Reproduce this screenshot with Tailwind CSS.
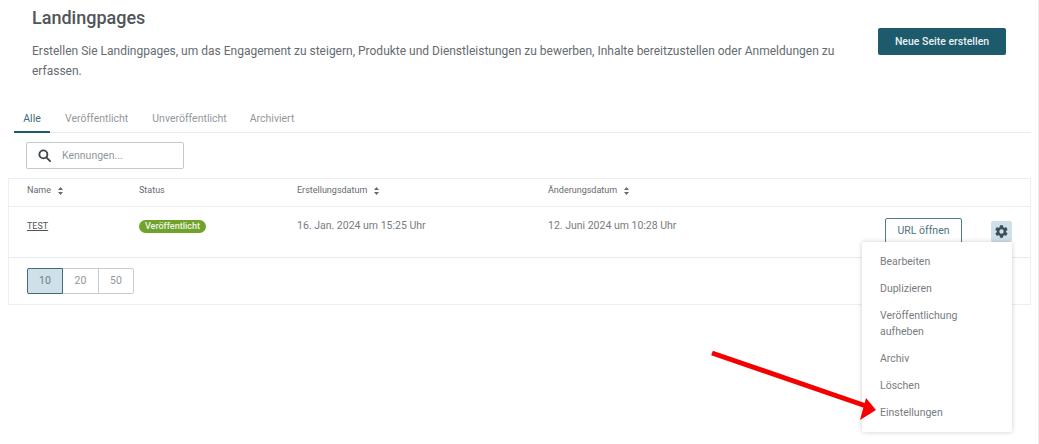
<!DOCTYPE html>
<html lang="de">
<head>
    <meta charset="UTF-8">
    <meta name="viewport" content="width=device-width, initial-scale=1.0">
    <title>Landingpages</title>
    <script src="https://cdn.jsdelivr.net/npm/@tailwindcss/browser@4"></script>
</head>
<body class="bg-white font-['Roboto',sans-serif] text-[#5f6368] overflow-hidden">
<div class="relative w-[1039px] h-[444px] overflow-hidden">
    <div class="w-[1031px] pl-[8px]">

        <!-- Kopfbereich -->
        <header class="flex items-start justify-between pl-[24px] pr-[25px] h-[104px]">
            <div class="w-[820px]">
                <h1 class="mt-[7px] text-[18px] leading-[22px] font-medium text-[#50555a]">Landingpages</h1>
                <p class="mt-[12px] text-[12px] leading-[20px] text-[#666b70]">Erstellen Sie Landingpages, um das Engagement zu steigern, Produkte und Dienstleistungen zu bewerben, Inhalte bereitzustellen oder Anmeldungen zu erfassen.</p>
            </div>
            <button class="mt-[28px] w-[128px] h-[27px] rounded-[2px] bg-[#1c5a6c] text-[#e8f0f2] text-[10.5px] font-medium">Neue Seite erstellen</button>
        </header>

        <!-- Tabs -->
        <nav class="flex h-[29px] ml-[6px] border-b border-[#e8eaec] text-[10.5px] text-[#93989c]">
            <a class="w-[36px] h-[29px] pt-[7px] text-center text-[#3f6b7a] border-b-2 border-[#1c5a6c]">Alle</a>
            <a class="ml-[15px] pt-[7px]">Veröffentlicht</a>
            <a class="ml-[24px] pt-[7px]">Unveröffentlicht</a>
            <a class="ml-[23px] pt-[7px]">Archiviert</a>
        </nav>

        <!-- Suche -->
        <div class="ml-[18px] mt-[9px] flex items-center w-[158px] h-[27px] border border-[#c3c8cc] rounded-[2px]">
            <svg class="ml-[11px] w-[13px] h-[13px] text-[#3f454a]" viewBox="0 0 14 14" fill="none" stroke="currentColor" stroke-width="2"><circle cx="5.8" cy="5.8" r="4.3"/><path d="M9 9l4 4" stroke-linecap="round"/></svg>
            <span class="ml-[11px] text-[10.5px] text-[#93989c]">Kennungen...</span>
        </div>

        <!-- Tabelle -->
        <section class="mt-[9px] border border-[#eceef0] h-[127px] text-[9px]">
            <div class="flex items-center h-[28px] pb-[3px] border-b border-[#eceef0] text-[#666b70]">
                <div class="w-[130px] pl-[18px] flex items-center gap-[7px]">Name
                    <svg class="w-[5px] h-[8px]" viewBox="0 0 5 8" fill="#666b70"><path d="M2.500 0L5 3H0zM2.500 8L0 5h5z"/></svg>
                </div>
                <div class="w-[158px]">Status</div>
                <div class="w-[251px] flex items-center gap-[7px]">Erstellungsdatum
                    <svg class="w-[5px] h-[8px]" viewBox="0 0 5 8" fill="#666b70"><path d="M2.500 0L5 3H0zM2.500 8L0 5h5z"/></svg>
                </div>
                <div class="flex items-center gap-[7px]">Änderungsdatum
                    <svg class="w-[5px] h-[8px]" viewBox="0 0 5 8" fill="#666b70"><path d="M2.500 0L5 3H0zM2.500 8L0 5h5z"/></svg>
                </div>
            </div>
            <div class="flex items-start h-[51px] border-b border-[#e8eaec]">
                <div class="w-[130px] pl-[18px] pt-[13px] underline text-[#50555a]">TEST</div>
                <div class="w-[158px] pt-[13px] flex items-start">
                    <span class="flex items-center h-[13px] px-[6px] rounded-full bg-[#6fa32c] text-[#eef5e4] text-[9px] font-medium">Veröffentlicht</span>
                </div>
                <div class="w-[251px] pt-[11px] text-[10.5px] text-[#777c80]">16. Jan. 2024 um 15:25 Uhr</div>
                <div class="w-[337px] pt-[11px] text-[10.5px] text-[#777c80]">12. Juni 2024 um 10:28 Uhr</div>
                <button class="mt-[11px] w-[77px] h-[26px] border border-[#4f7c8b] rounded-[2px] text-[10.5px] text-[#4f7382]">URL öffnen</button>
                <div class="ml-[29px] mt-[14px] w-[21px] h-[21px] rounded-[2px] bg-[#cfe0e8] flex items-center justify-center">
                    <svg class="w-[15px] h-[15px]" viewBox="0 0 24 24" fill="#3a4f5a"><path fill-rule="evenodd" d="M19.400 13c.04-.33.06-.66.06-1s-.02-.67-.06-1l2.100-1.650a.5.5 0 0 0 .12-.64l-2-3.460a.5.5 0 0 0-.6-.22l-2.490 1a7.300 7.300 0 0 0-1.730-1l-.38-2.650A.5.5 0 0 0 13.930 2h-4a.5.5 0 0 0-.49.42l-.38 2.650c-.62.26-1.200.6-1.730 1l-2.490-1a.5.5 0 0 0-.6.22l-2 3.460a.5.5 0 0 0 .12.64L4.470 11a7.900 7.900 0 0 0 0 2l-2.110 1.650a.5.5 0 0 0-.12.64l2 3.460c.12.22.38.3.6.22l2.490-1c.53.4 1.100.74 1.730 1l.38 2.650c.04.24.25.42.49.42h4c.25 0 .46-.18.49-.42l.38-2.650c.62-.26 1.200-.6 1.730-1l2.490 1c.23.08.48 0 .6-.22l2-3.460a.5.5 0 0 0-.12-.64zM12 15.500a3.500 3.500 0 1 1 0-7 3.500 3.500 0 0 1 0 7z"/></svg>
                </div>
            </div>
            <div class="pl-[18px] pt-[10px]">
                <div class="inline-flex h-[26px] border border-[#c8cdd1] rounded-[2px] text-[10.5px] text-[#93989c]">
                    <span class="w-[36px] -my-px -ml-px flex items-center justify-center bg-[#cfe0e8] border border-[#3f6b7a] rounded-l-[2px] text-[#66808c]">10</span>
                    <span class="w-[36px] flex items-center justify-center border-r border-[#c8cdd1]">20</span>
                    <span class="w-[34px] flex items-center justify-center">50</span>
                </div>
            </div>
        </section>
    </div>

    <!-- Rand rechts -->
    <div class="absolute top-0 right-0 bottom-0 w-px bg-[#eceef0]"></div>

    <!-- Aktionsmenue -->
    <ul class="absolute left-[862px] top-[242px] w-[150px] h-[190px] bg-white rounded-[2px] shadow-[0_0_5px_rgba(0,0,0,0.2)] text-[10.5px] leading-[16px] text-[#777c80] pl-[18px] pt-[12px]">
        <li class="h-[27px]">Bearbeiten</li>
        <li class="h-[27px]">Duplizieren</li>
        <li class="h-[43px] w-[100px]">Veröffentlichung aufheben</li>
        <li class="h-[27px]">Archiv</li>
        <li class="h-[27px]">Löschen</li>
        <li class="h-[27px]">Einstellungen</li>
    </ul>

    <!-- Pfeil -->
    <svg class="absolute left-0 top-0 pointer-events-none" width="1039" height="444" viewBox="0 0 1039 444">
        <path d="M712 353L866 406" stroke="#f40000" stroke-width="5" fill="none"/>
        <path d="M876 410L866 398L860 420z" fill="#f40000"/>
    </svg>
</div>
</body>
</html>
